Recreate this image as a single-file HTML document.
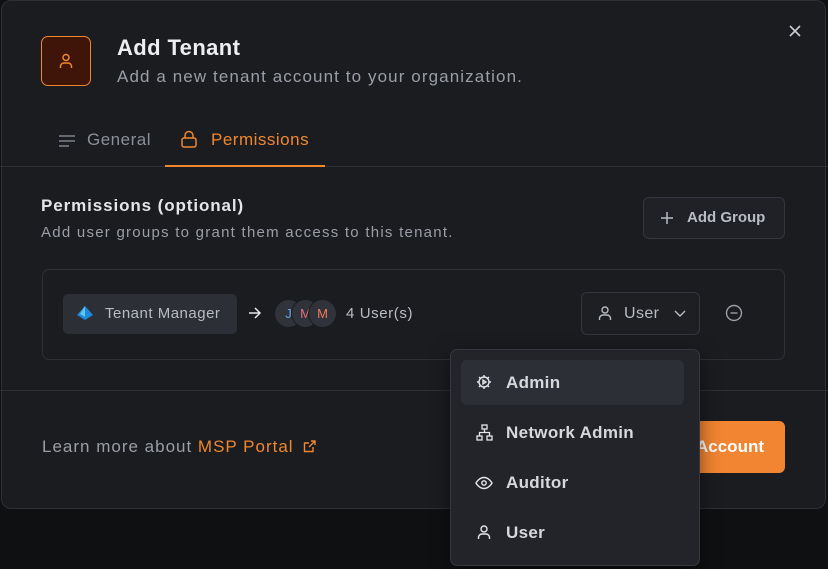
<!DOCTYPE html>
<html><head><style>
*{box-sizing:border-box;margin:0;padding:0}
body{width:828px;height:569px;background:#0f1012;font-family:"Liberation Sans",sans-serif;position:relative;overflow:hidden;color:#e6e7ea}
.modal{position:absolute;left:1px;top:0;width:825px;height:509px;background:#1b1c20;border:1px solid #2e3036;border-radius:10px}
.in{position:absolute;left:-2px;top:-1px;width:828px;height:509px}
.abs{position:absolute;white-space:nowrap}
.line{position:absolute;left:0;right:0;height:1px;background:#2e3036}
.btn{position:absolute;border:1px solid #33363d;border-radius:6px;background:#1f2126}
svg{position:absolute}
</style></head><body>
<div class="modal"><div class="in">
  <div class="abs" style="left:41px;top:36px;width:50px;height:50px;border:1px solid #f0862e;border-radius:7px;background:#3f1509"></div>
  <svg style="left:57px;top:52px" width="18" height="18" viewBox="0 0 18 18" fill="none" stroke="#f0862e" stroke-width="1.5"><circle cx="9" cy="5.5" r="3"/><path d="M3.5 16v-1.5a3.5 3.5 0 0 1 3.5-3.5h4a3.5 3.5 0 0 1 3.5 3.5V16"/></svg>
  <div class="abs" style="left:117px;top:35px;font-size:22px;font-weight:bold;color:#eceef0;letter-spacing:0.4px">Add Tenant</div>
  <div class="abs" style="left:117px;top:67px;font-size:17px;color:#9a9ea6;letter-spacing:1.1px">Add a new tenant account to your organization.</div>
  <svg style="left:788px;top:24px" width="14" height="14" viewBox="0 0 14 14" stroke="#c9ccd1" stroke-width="1.6"><path d="M2 2l10 10M12 2L2 12"/></svg>
  <svg style="left:58px;top:133px" width="18" height="16" stroke="#7d828b" stroke-width="1.5"><path d="M1 3h16M1 8h16M1 13h10"/></svg>
  <div class="abs" style="left:87px;top:130px;font-size:17px;color:#8a8f98;letter-spacing:0.5px">General</div>
  <svg style="left:180px;top:130px" width="18" height="18" viewBox="0 0 18 18" fill="none" stroke="#f0862e" stroke-width="1.5"><rect x="2" y="8" width="14" height="9" rx="2"/><path d="M5 8V5.5a4 4 0 0 1 8 0V8"/></svg>
  <div class="abs" style="left:211px;top:130px;font-size:17px;color:#f0862e;letter-spacing:0.5px">Permissions</div>
  <div class="line" style="top:166px"></div>
  <div class="abs" style="left:165px;top:165px;width:160px;height:2px;background:#f0862e"></div>
  <div class="abs" style="left:41px;top:196px;font-size:17px;font-weight:bold;color:#e3e5e8;letter-spacing:0.9px">Permissions (optional)</div>
  <div class="abs" style="left:41px;top:224px;font-size:15px;color:#9a9ea6;letter-spacing:1.25px">Add user groups to grant them access to this tenant.</div>
  <div class="btn" style="left:643px;top:197px;width:142px;height:42px"></div>
  <svg style="left:660px;top:211px" width="14" height="14" stroke="#b8bcc3" stroke-width="1.5"><path d="M7 1v12M1 7h12"/></svg>
  <div class="abs" style="left:687px;top:209px;font-size:15px;font-weight:bold;color:#b8bcc3">Add Group</div>
  <div class="abs" style="left:42px;top:269px;width:743px;height:91px;border:1px solid #2e3036;border-radius:7px"></div>
  <div class="abs" style="left:63px;top:294px;width:174px;height:40px;background:#2c2f35;border-radius:5px"></div>
  <svg style="left:77px;top:306px" width="16" height="14" viewBox="0 0 16 14"><path d="M8 0L0 9l8 5 8-5z" fill="#1e88d9"/><path d="M8 0L3 8l5 3z" fill="#5cc6f5"/></svg>
  <div class="abs" style="left:105px;top:305px;font-size:15px;color:#b8bcc3;letter-spacing:0.5px">Tenant Manager</div>
  <svg style="left:248px;top:306px" width="14" height="14" fill="none" stroke="#e6e7ea" stroke-width="1.5"><path d="M1 7h11M7 2l5 5-5 5"/></svg>
  <div class="abs" style="left:275px;top:300px;width:27px;height:27px;border-radius:50%;background:#30333a;color:#5fa8f0;font-size:13px;text-align:center;line-height:27px">J</div>
  <div class="abs" style="left:292px;top:300px;width:27px;height:27px;border-radius:50%;background:#30333a;color:#e5707f;font-size:13px;text-align:center;line-height:27px;box-shadow:0 0 0 1px #1b1c20">M</div>
  <div class="abs" style="left:309px;top:300px;width:27px;height:27px;border-radius:50%;background:#30333a;color:#f07a5a;font-size:13px;text-align:center;line-height:27px;box-shadow:0 0 0 1px #1b1c20">M</div>
  <div class="abs" style="left:346px;top:305px;font-size:15px;color:#b8bcc3;letter-spacing:0.6px">4 User(s)</div>
  <div class="btn" style="left:581px;top:292px;width:119px;height:43px;background:#1d1f23"></div>
  <svg style="left:597px;top:305px" width="16" height="16" viewBox="0 0 16 16" fill="none" stroke="#b8bcc3" stroke-width="1.4"><circle cx="8" cy="5" r="3"/><path d="M2.5 15v-1.5a3.5 3.5 0 0 1 3.5-3.5h4a3.5 3.5 0 0 1 3.5 3.5V15"/></svg>
  <div class="abs" style="left:624px;top:305px;font-size:16px;color:#b8bcc3;letter-spacing:0.4px">User</div>
  <svg style="left:674px;top:310px" width="12" height="8" fill="none" stroke="#b8bcc3" stroke-width="1.4"><path d="M1 1l5 5 5-5"/></svg>
  <svg style="left:725px;top:304px" width="18" height="18" fill="none" stroke="#9a9ea6" stroke-width="1.4"><circle cx="9" cy="9" r="7.5"/><path d="M5.5 9h7"/></svg>
  <div class="line" style="top:390px"></div>
  <div class="abs" style="left:42px;top:437px;font-size:17px;color:#9a9ea6;letter-spacing:1px">Learn more about <span style="color:#f0862e">MSP Portal</span></div>
  <svg style="left:303px;top:440px" width="13" height="13" fill="none" stroke="#f0862e" stroke-width="1.4"><path d="M10 7v4.5H1.5V3H6M8 1h4v4M12 1L6 7"/></svg>
  <div class="abs" style="left:661px;top:421px;width:124px;height:52px;background:#f28532;border-radius:6px;color:#fff;font-size:17px;font-weight:bold;line-height:52px;padding-left:35px">Account</div>
</div></div>
<div class="abs" style="left:450px;top:349px;width:250px;height:217px;background:#222429;border:1px solid #35383f;border-radius:7px;box-shadow:0 6px 20px rgba(0,0,0,.5)"></div>
<div class="abs" style="left:461px;top:360px;width:223px;height:45px;background:#2c2f35;border-radius:6px"></div>
<svg style="left:476px;top:374px" width="16" height="16" viewBox="0 0 16 16" fill="none" stroke="#e6e7ea" stroke-width="1.4"><circle cx="8" cy="8" r="5"/><path d="M8 1v2M8 13v2M1 8h2M13 8h2M3 3l1.4 1.4M11.6 11.6L13 13M3 13l1.4-1.4M11.6 4.4L13 3"/><path d="M7 6v4l3-2z"/></svg>
<div class="abs" style="left:506px;top:373px;font-size:17px;font-weight:bold;color:#d6d8dc;letter-spacing:0.3px">Admin</div>
<svg style="left:476px;top:424px" width="17" height="17" viewBox="0 0 17 17" fill="none" stroke="#e6e7ea" stroke-width="1.3"><rect x="6" y="1" width="5" height="4"/><rect x="1" y="12" width="5" height="4"/><rect x="11" y="12" width="5" height="4"/><path d="M8.5 5v3.5M3.5 12V8.5h10V12"/></svg>
<div class="abs" style="left:506px;top:423px;font-size:17px;font-weight:bold;color:#d6d8dc;letter-spacing:0.3px">Network Admin</div>
<svg style="left:475px;top:476px" width="18" height="14" viewBox="0 0 18 14" fill="none" stroke="#e6e7ea" stroke-width="1.4"><path d="M1 7s3-5.5 8-5.5S17 7 17 7s-3 5.5-8 5.5S1 7 1 7z"/><circle cx="9" cy="7" r="2.2"/></svg>
<div class="abs" style="left:506px;top:473px;font-size:17px;font-weight:bold;color:#d6d8dc;letter-spacing:0.3px">Auditor</div>
<svg style="left:476px;top:524px" width="16" height="16" viewBox="0 0 16 16" fill="none" stroke="#e6e7ea" stroke-width="1.4"><circle cx="8" cy="5" r="3"/><path d="M2.5 15v-1.5a3.5 3.5 0 0 1 3.5-3.5h4a3.5 3.5 0 0 1 3.5 3.5V15"/></svg>
<div class="abs" style="left:506px;top:523px;font-size:17px;font-weight:bold;color:#d6d8dc;letter-spacing:0.3px">User</div>
</body></html>
